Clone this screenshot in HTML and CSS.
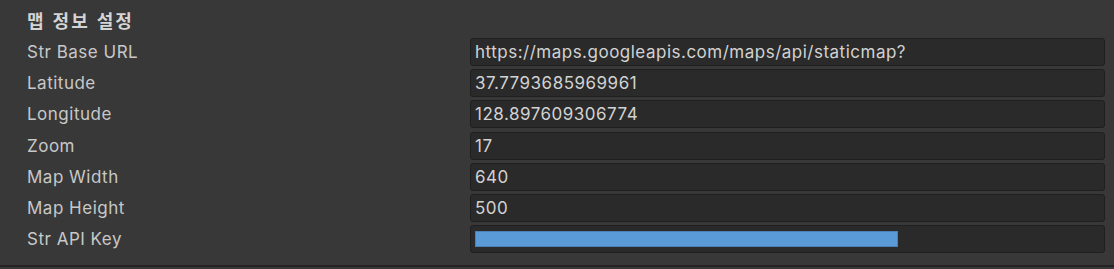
FILE: index.html
```html
<!DOCTYPE html>
<html lang="ko">
<head>
  <meta charset="UTF-8">
  <title>Map Settings</title>
  <link rel="stylesheet" href="styles.css">
</head>
<body>
  <div class="inspector">
    <div class="header">맵 정보 설정</div>
    <div class="rows">
      <div class="row">
        <span class="label">Str Base URL</span>
        <div class="field">https://maps.googleapis.com/maps/api/staticmap?</div>
      </div>
      <div class="row">
        <span class="label">Latitude</span>
        <div class="field">37.7793685969961</div>
      </div>
      <div class="row">
        <span class="label">Longitude</span>
        <div class="field">128.897609306774</div>
      </div>
      <div class="row">
        <span class="label">Zoom</span>
        <div class="field">17</div>
      </div>
      <div class="row">
        <span class="label">Map Width</span>
        <div class="field">640</div>
      </div>
      <div class="row">
        <span class="label">Map Height</span>
        <div class="field">500</div>
      </div>
      <div class="row">
        <span class="label">Str API Key</span>
        <div class="field"><span class="masked"></span></div>
      </div>
    </div>
  </div>
</body>
</html>
```

FILE: styles.css
```css
html, body {
  margin: 0;
  height: 100%;
  background-color: #383838;
}

body {
  font-family: Inter, "Noto Sans", "Noto Sans CJK KR", sans-serif;
  color: #c8c8c8;
}

.inspector {
  height: 267px;
  box-sizing: border-box;
  border-bottom: 2px solid #232323;
  padding: 9px 8px 0 27px;
}

.header {
  font-family: "Noto Sans CJK KR", sans-serif;
  font-weight: 700;
  font-size: 18px;
  letter-spacing: 2px;
  line-height: 22px;
  color: #d4d4d4;
  height: 22px;
  margin-bottom: 7px;
}

.rows {
  display: flex;
  flex-direction: column;
  gap: 3.2px;
}

.row {
  display: flex;
  align-items: center;
  height: 28px;
}

.label {
  width: 443px;
  font-size: 17px;
  letter-spacing: 0.5px;
}

.field {
  flex: 1;
  height: 26px;
  margin-right: 1px;
  padding-left: 4px;
  font-size: 17px;
  letter-spacing: 0.5px;
  line-height: 26px;
  background-color: #2a2a2a;
  border: 1px solid #1f1f1f;
  border-radius: 3px;
  color: #d2d2d2;
  display: flex;
  align-items: center;
}

.masked {
  display: block;
  width: 423px;
  height: 16px;
  background-color: #5a9ad6;
  border: 1px solid #4a82b8;
  box-sizing: border-box;
}
```
